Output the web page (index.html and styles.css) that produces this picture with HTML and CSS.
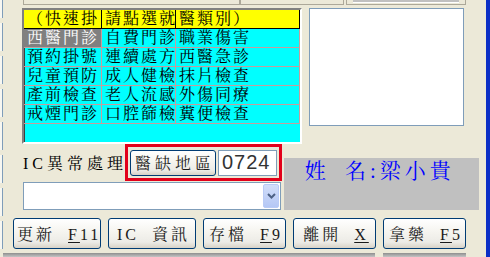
FILE: index.html
```html
<!DOCTYPE html>
<html lang="zh-Hant">
<head>
    <meta charset="UTF-8">
    <title>掛號</title>
    <link rel="stylesheet" href="styles.css">
</head>
<body>
    <div class="window">
        <!-- 左邊被切到的欄位 -->
        <div class="edge-left">
            <span class="first"></span>
            <span></span>
            <span></span>
            <span></span>
            <span></span>
            <span></span>
            <span></span>
            <span></span>
        </div>

        <div class="form">
            <div class="top-strip">
                <div class="tab tab-a"></div>
                <div class="tab tab-b"></div>
                <div class="tab tab-c"><div class="tab-fill"></div></div>
            </div>

            <div class="upper">
                <div class="quick-grid">
                    <div class="cell head">（快速掛</div>
                    <div class="cell head">請點選就</div>
                    <div class="cell head">醫類別）</div>

                    <div class="cell picked">西醫門診</div>
                    <div class="cell">自費門診</div>
                    <div class="cell">職業傷害</div>

                    <div class="cell">預約掛號</div>
                    <div class="cell">連續處方</div>
                    <div class="cell">西醫急診</div>

                    <div class="cell">兒童預防</div>
                    <div class="cell">成人健檢</div>
                    <div class="cell">抹片檢查</div>

                    <div class="cell">產前檢查</div>
                    <div class="cell">老人流感</div>
                    <div class="cell">外傷同療</div>

                    <div class="cell">戒煙門診</div>
                    <div class="cell">口腔篩檢</div>
                    <div class="cell">糞便檢查</div>
                </div>
                <div class="list-panel"></div>
            </div>

            <div class="middle">
                <div class="ic-area">
                    <div class="ic-row">
                        <span class="ic-label">IC異常處理</span>
                        <div class="red-box">
                            <button class="xp-btn area-btn">醫缺地區</button>
                            <input class="area-code" type="text" value="0724">
                        </div>
                    </div>
                    <div class="combo">
                        <span class="combo-arrow">
                            <svg width="9" height="6" viewBox="0 0 9 6"><path d="M1 1l3.5 3.5L8 1" fill="none" stroke="#4d6185" stroke-width="2"/></svg>
                        </span>
                    </div>
                </div>
                <div class="name-box">姓<span class="name-gap"></span>名:梁小貴</div>
            </div>

            <div class="actions">
                <button class="xp-btn btn-wide">更新 <u>F</u>11</button>
                <button class="xp-btn btn-wide">IC 資訊</button>
                <button class="xp-btn">存檔 <u>F</u>9</button>
                <button class="xp-btn">離開 <u>X</u></button>
                <button class="xp-btn">拿藥 <u>F</u>5</button>
            </div>

            <div class="bottom-strip">
                <span class="seg-a"></span>
                <span class="seg-b"></span>
            </div>
        </div>

        <div class="edge-right"></div>
    </div>
</body>
</html>
```

FILE: styles.css
```css
:root {
    --face: #ece9d8;
    --xp-border: #7f9db9;
    --btn-border: #003c74;
    --grid-line: #c89c9c;
}
body, html {
    margin: 0;
    padding: 0;
    background-color: var(--face);
    font-family: "Liberation Serif", "Noto Serif CJK TC", "Noto Sans CJK TC", serif;
    font-size: 16px;
    color: #000;
    overflow: hidden;
}
.window {
    display: flex;
    width: 490px;
    height: 257px;
}
.edge-left {
    width: 3px;
    flex: none;
    display: flex;
    flex-direction: column;
    gap: 5px;
}
.edge-left span {
    height: 28px;
    flex: none;
    box-sizing: border-box;
    background-color: #f7f7f2;
    border-right: 1px solid var(--xp-border);
}
.edge-left span.first {
    height: 18px;
}
.form {
    flex: 1;
    min-width: 0;
    display: flex;
    flex-direction: column;
}
.edge-right {
    width: 4px;
    flex: none;
    background-color: #0b2fc6;
}

/* 上方被切到的框 */
.top-strip {
    height: 5px;
    display: flex;
    padding-left: 20px;
}
.tab {
    height: 5px;
    box-sizing: border-box;
    border: 1px solid #aca899;
    border-top: none;
}
.tab-a { width: 217px; }
.tab-b { width: 104px; }
.tab-c {
    width: 120px;
    margin-left: 2px;
    padding: 0 6px;
}
.tab-fill {
    height: 2px;
    background-color: #c0c0c0;
    border-bottom: 1px solid #fff;
}

/* 快速掛號表格 */
.upper {
    display: flex;
    align-items: flex-start;
    margin-top: 3px;
    padding-left: 19px;
}
.quick-grid {
    width: 280px;
    height: 136px;
    box-sizing: border-box;
    border: 2px solid;
    border-color: #808080 #fff #fff #808080;
    box-shadow: inset 1px 1px 0 #404040;
    background-color: #0ff;
    display: grid;
    grid-template-columns: 78px 74px 124px;
    grid-auto-rows: 19px;
    align-content: start;
}
.cell {
    box-sizing: border-box;
    border-right: 1px solid var(--grid-line);
    border-bottom: 1px solid var(--grid-line);
    padding-left: 3px;
    line-height: 18px;
    letter-spacing: 2px;
    white-space: nowrap;
    overflow: hidden;
}
.cell.head {
    background-color: #ff0;
    border-color: #000;
}
.cell.picked {
    background-color: #808080;
    color: #fff;
}
.list-panel {
    width: 155px;
    height: 118px;
    margin-left: 7px;
    box-sizing: border-box;
    background-color: #fff;
    border: 1px solid var(--xp-border);
}

/* IC 區塊 */
.middle {
    display: flex;
    align-items: flex-start;
    padding-left: 20px;
}
.ic-area {
    width: 259px;
    flex: none;
}
.ic-row {
    display: flex;
    align-items: center;
}
.ic-label {
    width: 102px;
    flex: none;
    letter-spacing: 4px;
    white-space: nowrap;
}
.red-box {
    width: 157px;
    height: 37px;
    box-sizing: border-box;
    border: 3px solid #e2001a;
    display: flex;
    align-items: center;
    gap: 2px;
    padding-left: 2px;
}
.xp-btn {
    height: 31px;
    width: 83px;
    flex: none;
    box-sizing: border-box;
    border: 1px solid var(--btn-border);
    border-radius: 3px;
    background: linear-gradient(#fff 0%, #f5f4ef 45%, #ecebe6 80%, #d8d2c6 100%);
    font: inherit;
    color: #1a1a1a;
    letter-spacing: 3px;
    word-spacing: 6px;
    padding: 0 0 0 3px;
    white-space: nowrap;
}
.xp-btn u {
    text-decoration-thickness: 1px;
    text-underline-offset: 2px;
}
.area-btn {
    width: 86px;
    height: 26px;
    letter-spacing: 4px;
    padding-left: 4px;
}
.area-code {
    width: 59px;
    height: 26px;
    box-sizing: border-box;
    border: 1px solid var(--xp-border);
    background-color: #fff;
    font-family: "Liberation Sans", sans-serif;
    font-size: 20px;
    letter-spacing: 1px;
    color: #333;
    padding: 0 3px;
    outline: none;
}
.combo {
    margin-top: 1px;
    width: 258px;
    height: 28px;
    box-sizing: border-box;
    border: 1px solid var(--xp-border);
    background-color: #fff;
    display: flex;
    justify-content: flex-end;
    padding: 1px;
}
.combo-arrow {
    width: 16px;
    box-sizing: border-box;
    border: 1px solid #b9cbf6;
    border-radius: 2px;
    background: linear-gradient(#d2def9, #b4c7f5);
    display: flex;
    align-items: center;
    justify-content: center;
}
.name-box {
    margin-left: 2px;
    margin-top: 14px;
    width: 195px;
    height: 52px;
    box-sizing: border-box;
    background-color: #c0c0c0;
    color: #00f;
    font-size: 21px;
    line-height: 26px;
    letter-spacing: 4px;
    padding-left: 21px;
    white-space: nowrap;
}
.name-gap {
    display: inline-block;
    width: 15px;
}

/* 下方按鈕 */
.actions {
    display: flex;
    gap: 7px;
    margin-top: 8px;
    padding-left: 10px;
}
.btn-wide {
    width: 88px;
}
.bottom-strip {
    display: flex;
    margin-top: 4px;
    height: 4px;
}
.bottom-strip span {
    height: 4px;
    background: linear-gradient(#8e8e8e, #c4c4c4);
}
.seg-a { width: 372px; }
.seg-b {
    width: 83px;
    margin-left: 8px;
}
```
